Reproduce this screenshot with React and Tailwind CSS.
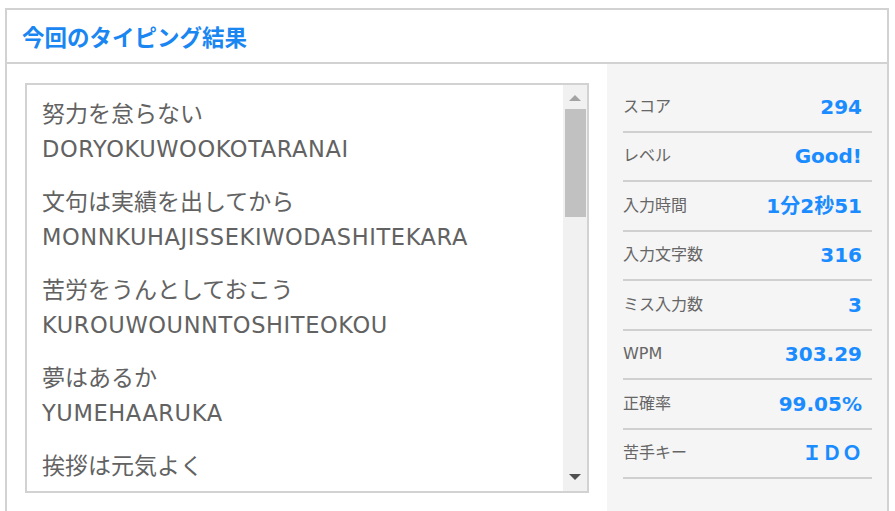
import React from 'react';

const sentences = [
    { ja: '努力を怠らない', ro: 'DORYOKUWOOKOTARANAI' },
    { ja: '文句は実績を出してから', ro: 'MONNKUHAJISSEKIWODASHITEKARA' },
    { ja: '苦労をうんとしておこう', ro: 'KUROUWOUNNTOSHITEOKOU' },
    { ja: '夢はあるか', ro: 'YUMEHAARUKA' },
    { ja: '挨拶は元気よく' },
];

const stats = [
    { label: 'スコア', value: '294' },
    { label: 'レベル', value: 'Good!' },
    { label: '入力時間', value: '1分2秒51' },
    { label: '入力文字数', value: '316' },
    { label: 'ミス入力数', value: '3' },
    { label: 'WPM', value: '303.29' },
    { label: '正確率', value: '99.05%' },
    { label: '苦手キー', value: 'ＩＤＯ' },
];

const font = "font-['DejaVu_Sans','Noto_Sans_CJK_JP',sans-serif]";

export default function App() {
    return (
        <div className={`w-[895px] h-[511px] overflow-hidden bg-white ${font}`}>
            <div className="mt-[8px] ml-[5px] w-[884px] border-2 border-[#d2d2d2]">
                {/* header */}
                <div className="h-[54px] border-b-2 border-[#d2d2d2] flex items-center pl-[15px]">
                    <h2 className="text-[22.5px] font-bold text-[#1a86f2] font-['Noto_Sans_CJK_JP',sans-serif] leading-none">
                        今回のタイピング結果
                    </h2>
                </div>

                <div className="flex h-[447px]">
                    {/* typed sentences */}
                    <div className="w-[600px] pl-[18px] pt-[19px]">
                        <div className="w-[564px] h-[410px] border-2 border-[#d2d2d2] flex overflow-hidden">
                            <div className="flex-1 overflow-hidden pl-[15px] pt-[9px] text-[#626262]">
                                {sentences.map((s) => (
                                    <div key={s.ja} className="mb-[14px]">
                                        <p className="leading-[36px] text-[23px] font-['Noto_Sans_CJK_JP',sans-serif]">{s.ja}</p>
                                        {s.ro && (
                                            <p className="leading-[38px] text-[22.5px] tracking-[0.6px] font-['DejaVu_Sans',sans-serif]">{s.ro}</p>
                                        )}
                                    </div>
                                ))}
                            </div>
                            {/* scrollbar */}
                            <div className="w-[24px] bg-[#f1f1f1] flex flex-col items-center">
                                <div className="h-[22px] flex items-center justify-center pt-[3px]">
                                    <div className="w-0 h-0 border-l-[6px] border-r-[6px] border-b-[6px] border-l-transparent border-r-transparent border-b-[#a3a3a3]" />
                                </div>
                                <div className="mt-[2px] ml-[1px] w-[21px] h-[108px] bg-[#c1c1c1]" />
                                <div className="flex-1" />
                                <div className="h-[22px] flex items-center justify-center pb-[6px]">
                                    <div className="w-0 h-0 border-l-[6px] border-r-[6px] border-t-[6px] border-l-transparent border-r-transparent border-t-[#505050]" />
                                </div>
                            </div>
                        </div>
                    </div>

                    {/* stats panel */}
                    <div className="w-[280px] bg-[#f5f5f5] pt-[19px] pl-[16px] pr-[15px]">
                        {stats.map((st) => (
                            <div key={st.label} className="h-[49.5px] border-b-2 border-[#d0d0d0] flex items-center justify-between pr-[10px]">
                                <span className="text-[16px] text-[#666]">{st.label}</span>
                                <span className="text-[20px] font-bold text-[#1a8cff]">{st.value}</span>
                            </div>
                        ))}
                    </div>
                </div>
            </div>
        </div>
    );
}
